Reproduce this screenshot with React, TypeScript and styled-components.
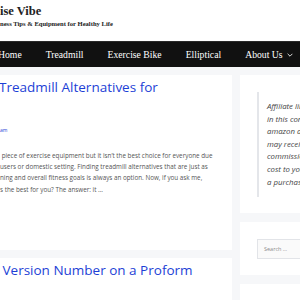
import React from 'react';
import styled, { createGlobalStyle } from 'styled-components';

const GlobalStyle = createGlobalStyle`
  html, body {
    margin: 0;
    padding: 0;
    background: #f6f7f9;
  }
  body {
    width: 300px;
    height: 300px;
    overflow: hidden;
    font-family: "Open Sans", "Liberation Sans", sans-serif;
  }
`;

const Page = styled.div`
  width: 300px;
  height: 300px;
  overflow: hidden;
  background: #f6f7f9;
`;

const Header = styled.header`
  height: 41px;
  background: #ffffff;
  padding: 4px 0 0 0;
  box-sizing: border-box;
`;

const SiteTitle = styled.div`
  font-family: "Liberation Serif", serif;
  font-weight: bold;
  font-size: 12.5px;
  line-height: 15px;
  color: #222222;
`;

const Tagline = styled.div`
  font-family: "Liberation Serif", serif;
  font-weight: bold;
  font-size: 6.6px;
  line-height: 9px;
  color: #222222;
  white-space: nowrap;
`;

const NavBar = styled.nav`
  height: 26px;
  background: #111111;
  border-top: 1px solid #2a2a2a;
  box-sizing: border-box;
  display: flex;
  align-items: center;
  white-space: nowrap;
`;

const NavItem = styled.span<{ $first?: boolean }>`
  font-family: "Liberation Serif", serif;
  font-size: 9.7px;
  color: #ffffff;
  padding: 0 12px;
  display: flex;
  align-items: center;
  gap: 4px;
  ${(p) => p.$first && 'padding-left: 0; margin-left: -2px;'}
`;

const Layout = styled.div`
  display: flex;
  gap: 8px;
  padding-top: 8px;
`;

const MainColumn = styled.main`
  width: 232px;
  flex-shrink: 0;
  display: flex;
  flex-direction: column;
  gap: 8px;
`;

const Article = styled.article<{ $height: number }>`
  background: #ffffff;
  height: ${(p) => p.$height}px;
  padding-top: 4px;
  box-sizing: border-box;
`;

const PostTitle = styled.h2`
  margin: 0;
  font-family: "Open Sans", sans-serif;
  font-weight: 500;
  font-size: 13.5px;
  line-height: 17px;
  color: #1d3fd6;
  white-space: nowrap;
  margin-left: -1px;
`;

const Meta = styled.div`
  font-size: 5px;
  line-height: 8px;
  color: #1d3fd6;
  margin-top: 30px;
`;

const Excerpt = styled.p`
  margin: 16px 0 0 0;
  font-size: 6.3px;
  line-height: 11.2px;
  color: #555555;
  white-space: nowrap;
`;

const Sidebar = styled.aside`
  width: 140px;
  flex-shrink: 0;
  display: flex;
  flex-direction: column;
  gap: 9px;
`;

const Widget = styled.section<{ $height: number }>`
  background: #ffffff;
  height: ${(p) => p.$height}px;
  padding: 17px 0 0 17px;
  box-sizing: border-box;
`;

const Disclosure = styled.blockquote`
  margin: 0;
  border-left: 2px solid #e4e6ea;
  padding: 8px 0 0 8px;
  height: 105px;
  box-sizing: border-box;
  font-style: italic;
  font-size: 7.8px;
  line-height: 12.6px;
  color: #444444;
  white-space: nowrap;
`;

const SearchInput = styled.div`
  width: 120px;
  height: 20px;
  border: 1px solid #e2e4e8;
  background: #fafafa;
  box-sizing: border-box;
  display: flex;
  align-items: center;
  padding-left: 6px;
  font-size: 5.5px;
  color: #8a8a8a;
`;

const Chevron = () => (
  <svg width="6" height="4" viewBox="0 0 10 6" fill="none" stroke="#ffffff" strokeWidth="1.4">
    <path d="M1 1l4 4 4-4" />
  </svg>
);

export default function App() {
  return (
    <Page>
      <GlobalStyle />
      <Header>
        <SiteTitle>ise Vibe</SiteTitle>
        <Tagline>ness Tips &amp; Equipment for Healthy Life</Tagline>
      </Header>
      <NavBar>
        <NavItem $first>Home</NavItem>
        <NavItem>Treadmill</NavItem>
        <NavItem>Exercise Bike</NavItem>
        <NavItem>Elliptical</NavItem>
        <NavItem>
          About Us <Chevron />
        </NavItem>
      </NavBar>
      <Layout>
        <MainColumn>
          <Article $height={175}>
            <PostTitle>Treadmill Alternatives for</PostTitle>
            <Meta>am</Meta>
            <Excerpt>
              &nbsp;piece of exercise equipment but it isn’t the best choice for everyone due
              <br />
              users or domestic setting. Finding treadmill alternatives that are just as
              <br />
              ning and overall fitness goals is always an option. Now, if you ask me,
              <br />
              s the best for you? The answer: it …
            </Excerpt>
          </Article>
          <Article $height={60}>
            <PostTitle>&nbsp;Version Number on a Proform</PostTitle>
          </Article>
        </MainColumn>
        <Sidebar>
          <Widget $height={138}>
            <Disclosure>
              Affiliate links
              <br />
              in this content
              <br />
              amazon associate
              <br />
              may receive a
              <br />
              commission at no
              <br />
              cost to you if you
              <br />
              a purchase.
            </Disclosure>
          </Widget>
          <Widget $height={53}>
            <SearchInput>Search …</SearchInput>
          </Widget>
          <Widget $height={40} />
        </Sidebar>
      </Layout>
    </Page>
  );
}
